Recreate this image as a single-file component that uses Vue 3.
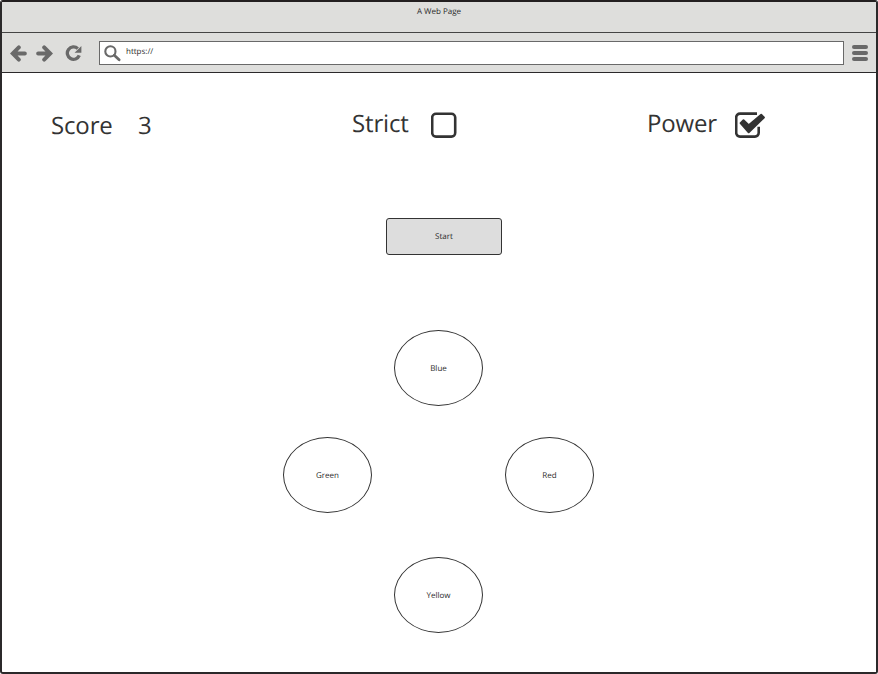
<script setup>
const rows = [
  [{ label: 'Blue' }],
  [{ label: 'Green' }, { label: 'Red' }],
  [{ label: 'Yellow' }]
]
</script>

<template>
  <div class="window">
    <header class="titlebar">A Web Page</header>
    <nav class="toolbar">
      <svg class="arrow" viewBox="0 0 16 16"><path d="M14 8H3M8.3 2.3L2.6 8l5.7 5.7" /></svg>
      <svg class="arrow next" viewBox="0 0 16 16"><path d="M2 8h11M7.7 2.3L13.4 8l-5.7 5.7" /></svg>
      <svg class="reload" viewBox="0 0 17 16">
        <path class="arc" d="M12.8 3.6A6.2 6.2 0 1 0 14.3 10.4" />
        <path class="tip" d="M16.4 1v6.8H9.6z" />
      </svg>
      <div class="address">
        <svg class="search" viewBox="0 0 17 17">
          <circle cx="6.4" cy="6.4" r="5.1" />
          <path d="M10.3 10.3l4.8 4.4" />
        </svg>
        <span>https://</span>
      </div>
      <div class="menu"><i></i><i></i><i></i></div>
    </nav>
    <main>
      <section class="status">
        <div class="score"><span>Score</span><span>3</span></div>
        <div class="option strict">
          <span>Strict</span>
          <svg viewBox="0 0 30 28"><rect x="1.2" y="2.8" width="23" height="22.8" rx="3.8" /></svg>
        </div>
        <div class="option power">
          <span>Power</span>
          <svg viewBox="0 0 30 28">
            <path d="M22 2.6H5a3.8 3.8 0 0 0-3.8 3.8v15.4a3.8 3.8 0 0 0 3.8 3.8h14.9a3.8 3.8 0 0 0 3.8-3.8v-6" />
            <path class="check" d="M5.6 12.1L8.5 9.3l5.2 4.9L26.2 3.8l2.7 2.7L13.7 21.3z" />
          </svg>
        </div>
      </section>
      <button class="start">Start</button>
      <section class="pads">
        <div v-for="(row, i) in rows" :key="i" class="row">
          <div v-for="pad in row" :key="pad.label" class="pad">{{ pad.label }}</div>
        </div>
      </section>
    </main>
  </div>
</template>

<style>
body { margin: 0; background: #fff; }
</style>

<style scoped>
.window {
  box-sizing: border-box;
  width: 878px;
  height: 674px;
  border: 2px solid #2b292a;
  border-top-color: #231f20;
  border-radius: 3px;
  overflow: hidden;
  background: #fff;
  color: #2b2b2b;
  font: 8px/12px "Open Sans", "Noto Sans", sans-serif;
  text-rendering: geometricPrecision;
}
.titlebar {
  box-sizing: border-box;
  height: 31px;
  padding-top: 4px;
  border-bottom: 1px solid #444;
  background: #dededc;
  text-align: center;
}
.toolbar {
  box-sizing: border-box;
  display: flex;
  align-items: center;
  height: 40px;
  padding: 0 8px;
  border-bottom: 1px solid #2b292a;
  background: #dededc;
}
.arrow, .reload, .search { flex: none; fill: none; stroke: #696969; }
.arrow { width: 17px; height: 17px; margin-top: 1px; stroke-width: 3.7; stroke-linecap: round; }
.next { margin-left: 9px; }
.reload { width: 17px; height: 16px; margin: 1px 0 0 12px; }
.arc { stroke-width: 3.3; }
.tip { fill: #696969; stroke: none; }
.address {
  box-sizing: border-box;
  display: flex;
  align-items: center;
  width: 745px;
  height: 24px;
  margin-left: 17px;
  padding-left: 4px;
  border: 1px solid #696969;
  background: #fff;
}
.address span { margin: -1px 0 0 5px; }
.search { width: 17px; height: 17px; margin-top: 1px; stroke-width: 2.1; stroke-linecap: round; }
.search path { stroke-width: 2.8; }
.menu { display: grid; gap: 2px; margin-left: 8px; }
.menu i { width: 16px; height: 4px; border-radius: 2px; background: #696969; }
main { display: flex; flex-direction: column; align-items: center; }
.status {
  display: flex;
  align-self: stretch;
  height: 34px;
  margin-top: 33px;
  padding-left: 49px;
  color: #333;
  font-size: 24px;
  line-height: 36px;
  letter-spacing: -0.15px;
}
.score { display: flex; width: 301px; padding-top: 2px; }
.score span:first-child { width: 87px; }
.option { display: flex; }
.option svg {
  width: 30px;
  height: 28px;
  margin-top: 5px;
  fill: none;
  stroke: #333;
  stroke-width: 2.6;
}
.strict { width: 295px; }
.strict span { width: 79px; }
.power span { width: 88px; }
.option .check { fill: #333; stroke-width: 2; stroke-linejoin: round; }
.start {
  box-sizing: border-box;
  width: 116px;
  height: 37px;
  margin: 78px 0 0 10px;
  padding: 0;
  border: 1px solid #333;
  border-radius: 3px;
  background: #ddd;
  color: inherit;
  font: inherit;
  text-rendering: inherit;
}
.pads { display: grid; justify-items: center; margin: 75px 1px 0 0; }
.row { display: flex; gap: 133px; margin-bottom: 31px; }
.row:nth-child(2) { margin-bottom: 44px; }
.pad {
  box-sizing: border-box;
  width: 89px;
  height: 76px;
  border: 1px solid #333;
  border-radius: 50%;
  line-height: 75px;
  text-align: center;
}
</style>
